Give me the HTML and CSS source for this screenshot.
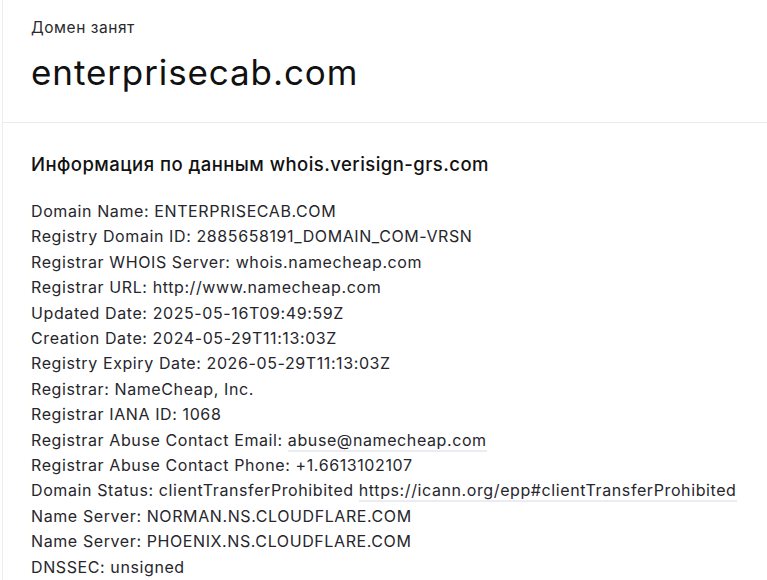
FILE: index.html
```html
<!DOCTYPE html>
<html lang="ru">
<head>
<meta charset="utf-8">
<link rel="stylesheet" href="styles.css">
</head>
<body>
<div class="card">
  <header class="top">
    <div class="label">Домен занят</div>
    <h1 class="domain">enterprisecab.com</h1>
  </header>
  <section class="info">
    <h2 class="title">Информация по данным whois.verisign-grs.com</h2>
    <div class="rows">
      <div>Domain Name: ENTERPRISECAB.COM</div>
      <div>Registry Domain ID: 2885658191_DOMAIN_COM-VRSN</div>
      <div>Registrar WHOIS Server: whois.namecheap.com</div>
      <div>Registrar URL: http://www.namecheap.com</div>
      <div>Updated Date: 2025-05-16T09:49:59Z</div>
      <div>Creation Date: 2024-05-29T11:13:03Z</div>
      <div>Registry Expiry Date: 2026-05-29T11:13:03Z</div>
      <div>Registrar: NameCheap, Inc.</div>
      <div>Registrar IANA ID: 1068</div>
      <div>Registrar Abuse Contact Email: <a class="link" href="#">abuse@namecheap.com</a></div>
      <div>Registrar Abuse Contact Phone: +1.6613102107</div>
      <div>Domain Status: clientTransferProhibited <a class="link" href="#">https://icann.org/epp#clientTransferProhibited</a></div>
      <div>Name Server: NORMAN.NS.CLOUDFLARE.COM</div>
      <div>Name Server: PHOENIX.NS.CLOUDFLARE.COM</div>
      <div>DNSSEC: unsigned</div>
    </div>
  </section>
</div>
</body>
</html>
```
FILE: styles.css
```css
html, body {
  margin: 0;
  padding: 0;
  background: #fff;
}
body {
  font-family: Inter, "Noto Sans", sans-serif;
  color: #1f1f24;
  padding-left: 2px;
}
.card {
  border-left: 1px solid #e8edf0;
  min-height: 580px;
}
.top {
  padding: 18px 0 0 28px;
  height: 123px;
  border-bottom: 1px solid #e8edf0;
  box-sizing: border-box;
}
.label {
  font-size: 15.5px;
  line-height: 20px;
  letter-spacing: 0.55px;
  color: #2a2a2e;
}
.domain {
  margin: 14px 0 0;
  font-size: 35px;
  font-weight: 400;
  line-height: 40px;
  color: #111;
  letter-spacing: 0.9px;
}
.info {
  padding: 28px 0 0 28px;
}
.title {
  margin: 0 0 22px;
  font-size: 18.5px;
  font-weight: 500;
  line-height: 26px;
  letter-spacing: 0.45px;
  color: #111;
}
.rows {
  font-size: 16px;
  line-height: 25.4px;
  letter-spacing: 0.6px;
  color: #26262c;
}
.link {
  color: inherit;
  text-decoration: none;
  border-bottom: 2px solid #ebebf2;
}
```
